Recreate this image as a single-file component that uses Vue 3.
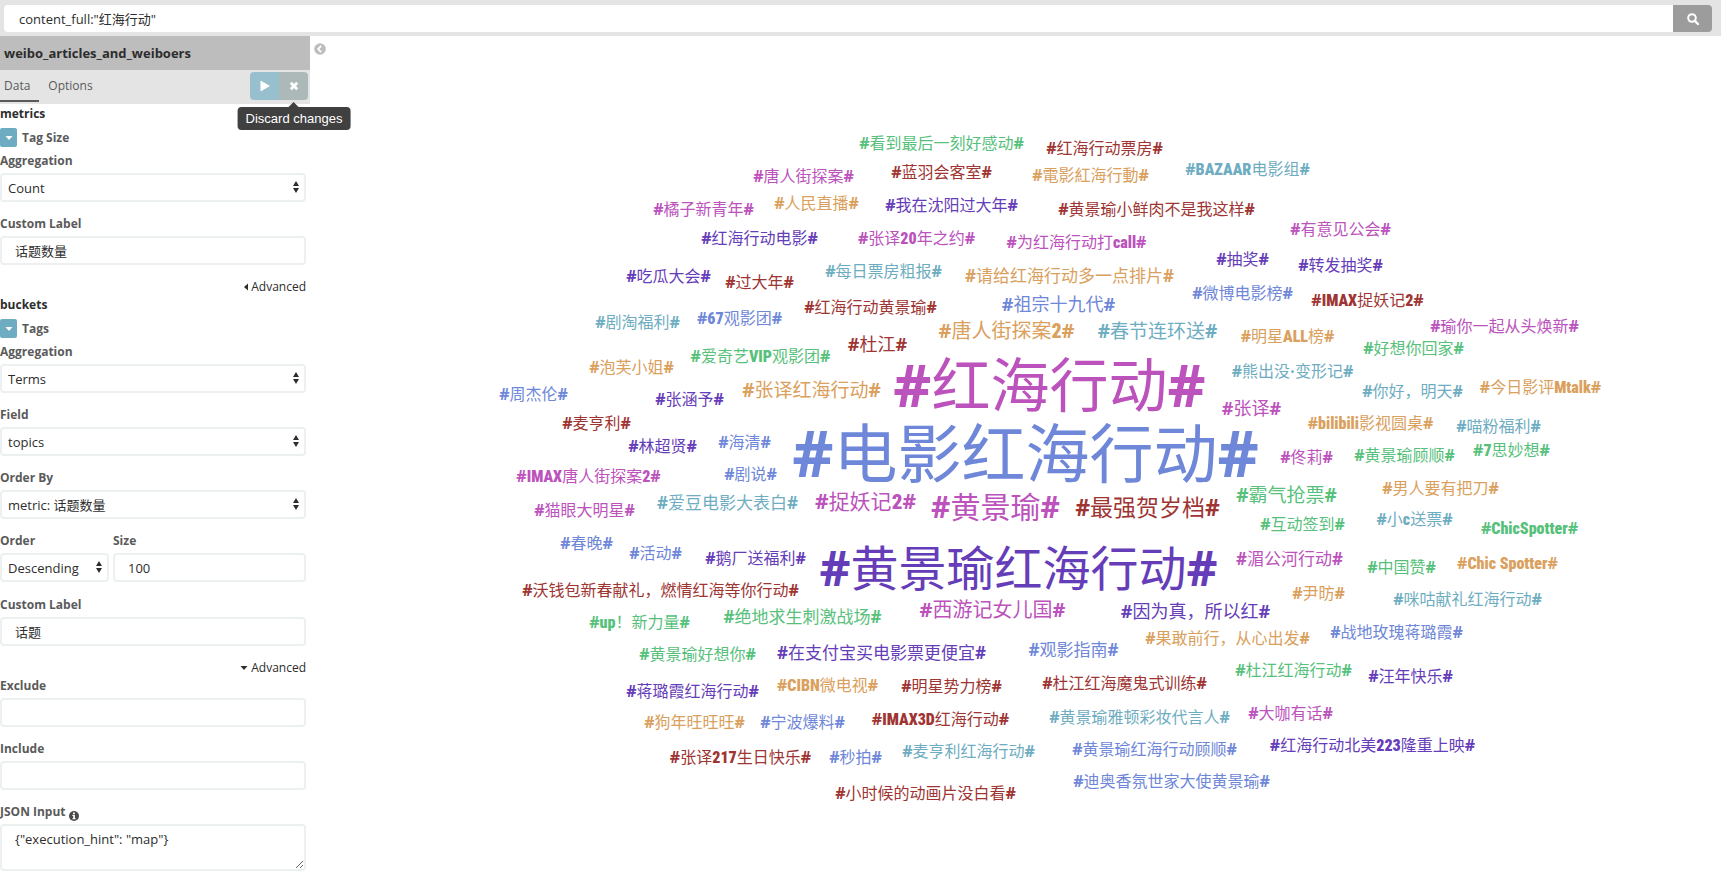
<script setup>
import { ref } from 'vue'

const query = ref('content_full:"红海行动"')
const metricLabel = ref('话题数量')
const bucketLabel = ref('话题')
const size = ref('100')
const exclude = ref('')
const include = ref('')
const json = ref('{"execution_hint": "map"}')

// Layout coordinates are stored around this centre of the cloud.
const CENTER = { x: 1025, y: 463 }

// text, centre x, centre y, font size, palette name
const tags = [
  ['看到最后一刻好感动', 941, 143, 16, 'green'],
  ['红海行动票房', 1104, 148, 16, 'red'],
  ['唐人街探案', 803, 176, 16, 'magenta'],
  ['蓝羽会客室', 941, 172, 16, 'red'],
  ['電影紅海行動', 1090, 175, 16, 'orange'],
  ['BAZAAR电影组', 1247, 170, 16, 'teal'],
  ['橘子新青年', 703, 209, 16, 'magenta'],
  ['人民直播', 816, 203, 16, 'orange'],
  ['我在沈阳过大年', 951, 205, 16, 'purple'],
  ['黄景瑜小鲜肉不是我这样', 1156, 209, 16, 'red'],
  ['红海行动电影', 759, 238, 16, 'purple'],
  ['张译20年之约', 916, 239, 16, 'magenta'],
  ['为红海行动打call', 1076, 243, 16, 'magenta'],
  ['有意见公会', 1340, 229, 16, 'magenta'],
  ['抽奖', 1242, 259, 16, 'purple'],
  ['转发抽奖', 1340, 265, 16, 'purple'],
  ['吃瓜大会', 668, 276, 16, 'purple'],
  ['过大年', 759, 282, 16, 'red'],
  ['每日票房粗报', 883, 271, 16, 'teal'],
  ['请给红海行动多一点排片', 1069, 276, 17, 'orange'],
  ['微博电影榜', 1242, 293, 16, 'blue'],
  ['IMAX捉妖记2', 1367, 301, 16, 'red'],
  ['红海行动黄景瑜', 870, 307, 16, 'red'],
  ['祖宗十九代', 1058, 304, 18, 'blue'],
  ['剧淘福利', 637, 322, 16, 'teal'],
  ['67观影团', 739, 319, 16, 'blue'],
  ['唐人街探案2', 1006, 331, 20, 'orange'],
  ['春节连环送', 1157, 331, 19, 'teal'],
  ['明星ALL榜', 1287, 337, 16, 'orange'],
  ['瑜你一起从头焕新', 1504, 326, 16, 'magenta'],
  ['好想你回家', 1413, 348, 16, 'green'],
  ['杜江', 877, 344, 18, 'red'],
  ['泡芙小姐', 631, 367, 16, 'orange'],
  ['爱奇艺VIP观影团', 760, 357, 16, 'green'],
  ['红海行动', 1049, 384, 59, 'magenta'],
  ['熊出没·变形记', 1292, 372, 16, 'teal'],
  ['你好，明天', 1412, 391, 16, 'teal'],
  ['今日影评Mtalk', 1540, 388, 16, 'orange'],
  ['周杰伦', 533, 394, 16, 'blue'],
  ['张涵予', 689, 399, 16, 'purple'],
  ['张译红海行动', 811, 390, 19, 'orange'],
  ['张译', 1251, 408, 18, 'magenta'],
  ['麦亨利', 596, 423, 16, 'red'],
  ['bilibili影视圆桌', 1370, 424, 16, 'orange'],
  ['喵粉福利', 1498, 426, 16, 'teal'],
  ['林超贤', 662, 446, 16, 'purple'],
  ['海清', 744, 442, 16, 'blue'],
  ['电影红海行动', 1025, 452, 64, 'blue'],
  ['佟莉', 1306, 457, 16, 'magenta'],
  ['黄景瑜顾顺', 1404, 455, 16, 'green'],
  ['7思妙想', 1511, 451, 16, 'green'],
  ['IMAX唐人街探案2', 588, 477, 16, 'magenta'],
  ['剧说', 750, 474, 16, 'blue'],
  ['男人要有把刀', 1440, 488, 16, 'orange'],
  ['猫眼大明星', 584, 510, 16, 'magenta'],
  ['爱豆电影大表白', 727, 503, 17, 'teal'],
  ['捉妖记2', 865, 502, 21, 'magenta'],
  ['黄景瑜', 995, 507, 30, 'magenta'],
  ['最强贺岁档', 1147, 508, 23, 'red'],
  ['霸气抢票', 1286, 495, 19, 'green'],
  ['互动签到', 1302, 524, 16, 'green'],
  ['小c送票', 1414, 520, 16, 'teal'],
  ['ChicSpotter', 1529, 529, 16, 'green'],
  ['春晚', 586, 543, 16, 'blue'],
  ['活动', 655, 553, 16, 'blue'],
  ['鹅厂送福利', 755, 558, 16, 'purple'],
  ['黄景瑜红海行动', 1018, 567, 48, 'purple'],
  ['湄公河行动', 1289, 559, 17, 'magenta'],
  ['中国赞', 1401, 567, 16, 'green'],
  ['Chic Spotter', 1507, 564, 16, 'orange'],
  ['沃钱包新春献礼，燃情红海等你行动', 660, 590, 16, 'red'],
  ['尹昉', 1318, 593, 16, 'orange'],
  ['咪咕献礼红海行动', 1467, 599, 16, 'teal'],
  ['up！新力量', 639, 623, 16, 'green'],
  ['绝地求生刺激战场', 802, 617, 17, 'green'],
  ['西游记女儿国', 992, 610, 20, 'magenta'],
  ['因为真，所以红', 1195, 611, 18, 'purple'],
  ['果敢前行，从心出发', 1227, 638, 16, 'orange'],
  ['战地玫瑰蒋璐霞', 1396, 632, 16, 'blue'],
  ['黄景瑜好想你', 697, 654, 16, 'green'],
  ['在支付宝买电影票更便宜', 881, 653, 17, 'purple'],
  ['观影指南', 1073, 650, 17, 'blue'],
  ['杜江红海行动', 1293, 670, 16, 'green'],
  ['汪年快乐', 1410, 676, 16, 'purple'],
  ['蒋璐霞红海行动', 692, 691, 16, 'purple'],
  ['CIBN微电视', 827, 686, 16, 'orange'],
  ['明星势力榜', 951, 686, 16, 'red'],
  ['杜江红海魔鬼式训练', 1124, 683, 16, 'red'],
  ['狗年旺旺旺', 694, 722, 16, 'orange'],
  ['宁波爆料', 802, 722, 16, 'blue'],
  ['IMAX3D红海行动', 940, 720, 16, 'red'],
  ['黄景瑜雅顿彩妆代言人', 1139, 717, 16, 'teal'],
  ['大咖有话', 1290, 713, 16, 'magenta'],
  ['张译217生日快乐', 740, 758, 16, 'red'],
  ['秒拍', 855, 757, 16, 'blue'],
  ['麦亨利红海行动', 968, 751, 16, 'teal'],
  ['黄景瑜红海行动顾顺', 1154, 749, 16, 'blue'],
  ['红海行动北美223隆重上映', 1372, 746, 16, 'purple'],
  ['小时候的动画片没白看', 925, 793, 16, 'red'],
  ['迪奥香氛世家大使黄景瑜', 1171, 781, 16, 'blue']
].map(([text, x, y, px, tone]) => ({
  text,
  tone,
  // The hash marks and Latin runs are set in a heavy face, the ideographs in a regular one.
  runs: text.match(/[\x20-\x7e·]+|[^\x20-\x7e·]+/g).map((t) => ({ t, latin: /[\x20-\x7e·]/.test(t) })),
  style: {
    left: `calc(50% + ${x - CENTER.x}px)`,
    top: `calc(50% + ${y - CENTER.y}px)`,
    fontSize: `${px}px`
  }
}))
</script>

<template>
  <div class="page">
    <form class="topbar" @submit.prevent>
      <input v-model="query" class="query" type="text" aria-label="Search query" />
      <button class="search" type="submit" aria-label="Search">
        <svg width="14" height="14" viewBox="0 0 14 14">
          <circle cx="6" cy="6" r="3.8" fill="none" stroke="#fff" stroke-width="2" />
          <path d="M8.8 8.8 L12 12" stroke="#fff" stroke-width="2.4" stroke-linecap="round" />
        </svg>
      </button>
    </form>

    <div class="body">
      <aside class="sidebar">
        <h1 class="index">weibo_articles_and_weiboers</h1>
        <nav class="tabs">
          <a class="tab active" href="#data">Data</a>
          <a class="tab" href="#options">Options</a>
          <div class="actions">
            <button class="apply" type="button" aria-label="Apply changes">
              <svg width="10" height="12" viewBox="0 0 10 12"><path d="M0.5 0.5 L10 6 L0.5 11.5 Z" fill="#fff" /></svg>
            </button>
            <button class="discard" type="button" aria-label="Discard changes">
              <svg width="10" height="10" viewBox="0 0 10 10"><path d="M1.8 1.8 L8.2 8.2 M8.2 1.8 L1.8 8.2" stroke="#fff" stroke-width="2.8" /></svg>
            </button>
            <div class="tooltip" role="tooltip">Discard changes</div>
          </div>
        </nav>

        <div class="editor">
          <h2 class="group">metrics</h2>
          <div class="agg">
            <button class="toggle" type="button" aria-label="Toggle Tag Size">
              <svg width="8" height="4" viewBox="0 0 8 4"><path d="M0.5 0 H7.5 L4 4 Z" fill="#fff" /></svg>
            </button>
            <span>Tag Size</span>
          </div>
          <div class="field">
            <label for="m-agg">Aggregation</label>
            <div class="select">
              <select id="m-agg"><option>Count</option></select>
              <svg width="6" height="12" viewBox="0 0 6 12"><path d="M0 5 L3 0 L6 5 Z M0 7 L3 12 L6 7 Z" fill="#2d2d2d" /></svg>
            </div>
          </div>
          <div class="field">
            <label for="m-label">Custom Label</label>
            <input id="m-label" v-model="metricLabel" type="text" />
          </div>
          <button class="advanced" type="button">
            <svg width="4" height="8" viewBox="0 0 4 8"><path d="M4 0.5 V7.5 L0 4 Z" fill="#2d2d2d" /></svg>
            Advanced
          </button>

          <h2 class="group">buckets</h2>
          <div class="agg">
            <button class="toggle" type="button" aria-label="Toggle Tags">
              <svg width="8" height="4" viewBox="0 0 8 4"><path d="M0.5 0 H7.5 L4 4 Z" fill="#fff" /></svg>
            </button>
            <span>Tags</span>
          </div>
          <div class="field">
            <label for="b-agg">Aggregation</label>
            <div class="select">
              <select id="b-agg"><option>Terms</option></select>
              <svg width="6" height="12" viewBox="0 0 6 12"><path d="M0 5 L3 0 L6 5 Z M0 7 L3 12 L6 7 Z" fill="#2d2d2d" /></svg>
            </div>
          </div>
          <div class="field">
            <label for="b-field">Field</label>
            <div class="select">
              <select id="b-field"><option>topics</option></select>
              <svg width="6" height="12" viewBox="0 0 6 12"><path d="M0 5 L3 0 L6 5 Z M0 7 L3 12 L6 7 Z" fill="#2d2d2d" /></svg>
            </div>
          </div>
          <div class="field">
            <label for="b-orderby">Order By</label>
            <div class="select">
              <select id="b-orderby"><option>metric: 话题数量</option></select>
              <svg width="6" height="12" viewBox="0 0 6 12"><path d="M0 5 L3 0 L6 5 Z M0 7 L3 12 L6 7 Z" fill="#2d2d2d" /></svg>
            </div>
          </div>
          <div class="pair">
            <div class="order">
              <label for="b-order">Order</label>
              <div class="select">
                <select id="b-order"><option>Descending</option></select>
                <svg width="6" height="12" viewBox="0 0 6 12"><path d="M0 5 L3 0 L6 5 Z M0 7 L3 12 L6 7 Z" fill="#2d2d2d" /></svg>
              </div>
            </div>
            <div class="size">
              <label for="b-size">Size</label>
              <input id="b-size" v-model="size" type="text" />
            </div>
          </div>
          <div class="field">
            <label for="b-label">Custom Label</label>
            <input id="b-label" v-model="bucketLabel" type="text" />
          </div>
          <button class="advanced" type="button">
            <svg width="8" height="4" viewBox="0 0 8 4"><path d="M0.5 0 H7.5 L4 4 Z" fill="#2d2d2d" /></svg>
            Advanced
          </button>
          <div class="field">
            <label for="b-exclude">Exclude</label>
            <input id="b-exclude" v-model="exclude" type="text" />
          </div>
          <div class="field">
            <label for="b-include">Include</label>
            <input id="b-include" v-model="include" type="text" />
          </div>
          <div class="field">
            <label class="with-icon" for="b-json">JSON Input
              <svg width="10" height="10" viewBox="0 0 10 10">
                <circle cx="5" cy="5" r="5" fill="#4a4a4a" />
                <path d="M4.1 1.4 H5.9 V2.9 H4.1 Z M3.4 3.8 H5.9 V7.2 H6.7 V8.3 H3.4 V7.2 H4.2 V4.9 H3.4 Z" fill="#fff" />
              </svg>
            </label>
            <textarea id="b-json" v-model="json"></textarea>
          </div>
        </div>
      </aside>

      <div class="gutter">
        <button class="collapse" type="button" aria-label="Collapse sidebar">
          <svg width="12" height="12" viewBox="0 0 12 12">
            <circle cx="6" cy="6" r="5.8" fill="#bdbdbd" />
            <path d="M7.2 2.8 L4.2 6 L7.2 9.2" fill="none" stroke="#fff" stroke-width="1.8" />
          </svg>
        </button>
      </div>

      <main class="cloud">
        <span v-for="tag in tags" :key="tag.text" class="tag" :class="tag.tone" :style="tag.style"><b>#</b><template v-for="(run, i) in tag.runs" :key="i"><b v-if="run.latin" class="narrow">{{ run.t }}</b><template v-else>{{ run.t }}</template></template><b>#</b></span>
      </main>
    </div>
  </div>
</template>

<style>
body {
  background: #fff;
}
</style>

<style scoped>
.page {
  display: flex;
  flex-direction: column;
  min-height: 100vh;
  font: 13px/18px "Open Sans", "Noto Sans CJK SC", sans-serif;
  color: #2d2d2d;
}
.page *,
.page {
  box-sizing: border-box;
}
button,
input,
select,
textarea {
  margin: 0;
  font: inherit;
  color: inherit;
}
button {
  padding: 0;
  border: 0;
  display: flex;
  align-items: center;
  justify-content: center;
  cursor: pointer;
}
.topbar {
  display: flex;
  padding: 5px 9px 4px 4px;
  background: #e4e4e4;
}
.query {
  flex: 1;
  min-width: 0;
  height: 27px;
  padding: 0 15px 1px;
  border: 0;
  border-radius: 4px 0 0 4px;
  background: #fff;
}
.search {
  width: 39px;
  background: #9c9c9c;
  border-radius: 0 4px 4px 0;
}
.body {
  flex: 1;
  display: flex;
}
.sidebar {
  flex: none;
  width: 310px;
}
.index {
  margin: 0;
  padding: 0 4px;
  font-size: 13px;
  line-height: 34px;
  font-weight: 700;
  background: #bdbdbd;
}
.tabs {
  display: flex;
  height: 34px;
  background: #e4e4e4;
}
.tab {
  height: 32px;
  padding: 0 9px 0 4px;
  font-size: 12px;
  line-height: 31px;
  color: #5a5a5a;
  text-decoration: none;
}
.tab + .tab {
  padding-left: 9px;
}
.tab.active {
  border-bottom: 2px solid #5a5a5a;
}
.actions {
  position: relative;
  display: flex;
  height: 28px;
  margin: 2px 2px 0 auto;
}
.actions button {
  width: 29px;
}
.apply {
  background: #97bfcd;
  border-radius: 4px 0 0 4px;
}
.discard {
  background: #adb9b9;
  border-radius: 0 4px 4px 0;
}
.tooltip {
  position: absolute;
  z-index: 2;
  top: 35px;
  left: 44px;
  transform: translateX(-50%);
  padding: 0 8px;
  line-height: 23px;
  font-family: "Liberation Sans", sans-serif;
  white-space: nowrap;
  color: #fff;
  background: #404040;
  border-radius: 4px;
}
.tooltip::before {
  content: "";
  position: absolute;
  left: 50%;
  bottom: 100%;
  margin-left: -5px;
  border: 5px solid transparent;
  border-top: 0;
  border-bottom-color: #404040;
}
.editor {
  padding: 1px 4px 0 0;
}
.group {
  margin: 0;
  font-size: 12px;
  line-height: 18px;
  font-weight: 700;
}
.agg {
  display: flex;
  align-items: center;
  gap: 5px;
  margin: 5px 0;
  height: 19px;
  font-size: 12px;
  font-weight: 700;
  color: #5a5a5a;
}
.toggle {
  width: 17px;
  height: 19px;
  background: #6eadc1;
  border-radius: 2px;
}
.field {
  margin-bottom: 13px;
}
label {
  display: block;
  margin-bottom: 3px;
  font-size: 12px;
  font-weight: 700;
  color: #5a5a5a;
}
.with-icon {
  display: flex;
  align-items: center;
  gap: 3px;
}
.with-icon svg {
  margin-top: 8px;
}
.editor input,
.editor select,
.editor textarea {
  display: block;
  width: 100%;
  height: 29px;
  padding: 0 13px;
  border: 2px solid #ecf0f1;
  border-radius: 4px;
  background: #fff;
}
.editor select {
  appearance: none;
  padding: 0 6px;
}
.editor textarea {
  height: 47px;
  padding: 4px 13px;
  resize: vertical;
}
.select {
  position: relative;
}
.select svg {
  position: absolute;
  right: 7px;
  top: 8px;
  pointer-events: none;
}
.pair {
  display: flex;
  gap: 4px;
  margin-bottom: 14px;
}
.order {
  width: 109px;
}
.size {
  flex: 1;
}
.advanced {
  margin-left: auto;
  gap: 3px;
  font-size: 12px;
  background: none;
}
.gutter {
  flex: none;
  width: 20px;
  padding: 7px 4px;
}
.collapse {
  background: none;
}
.cloud {
  position: relative;
  flex: 1;
  overflow: hidden;
}
.tag {
  position: absolute;
  transform: translate(-50%, -50%);
  line-height: 1;
  white-space: pre;
  font-family: "Noto Sans CJK SC", sans-serif;
}
.tag b {
  font-family: "Open Sans", sans-serif;
  font-weight: 700;
}
.tag .narrow {
  font-family: Impact, "Roboto Condensed", "Open Sans Condensed", Roboto, sans-serif;
  font-weight: 900;
}
.green { color: #57c17b; }
.blue { color: #6f87d8; }
.purple { color: #663db8; }
.magenta { color: #bc52bc; }
.red { color: #9e3533; }
.orange { color: #daa05d; }
.teal { color: #6eadc1; }
</style>
